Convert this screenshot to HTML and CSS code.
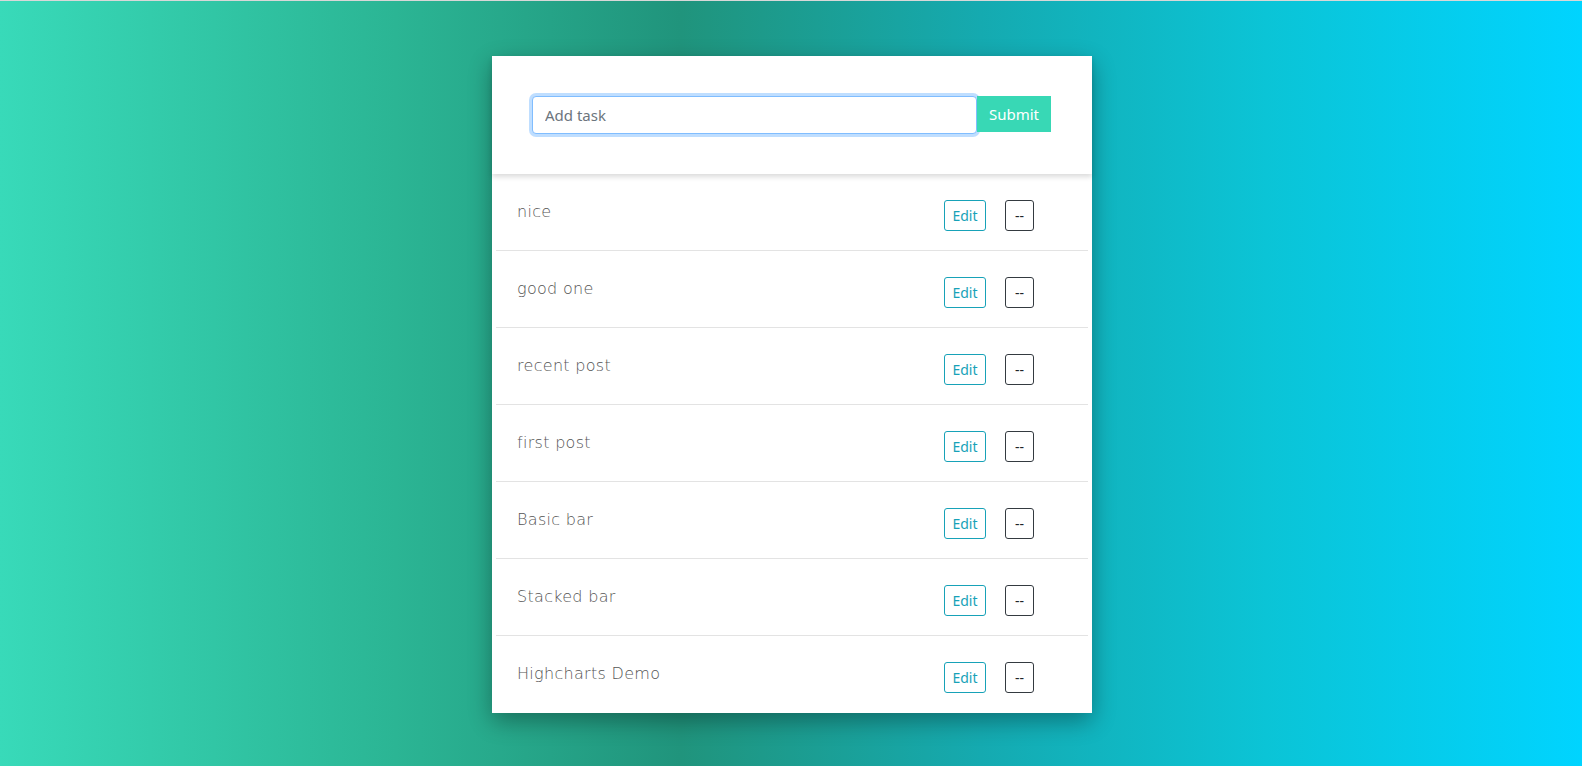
FILE: index.html
```html
<!DOCTYPE html>
<html lang="en">
<head>
<meta charset="utf-8">
<title>Todo</title>
<link rel="stylesheet" href="styles.css">
</head>
<body>
<div class="page">
  <div class="card">
    <form class="add-form">
      <input class="task-input" type="text" placeholder="Add task" autofocus>
      <button class="submit-btn" type="button">Submit</button>
    </form>
    <ul class="task-list">
      <li class="task"><span class="task-name">nice</span><div class="actions"><button class="btn btn-edit">Edit</button><button class="btn btn-del">--</button></div></li>
      <li class="task"><span class="task-name">good one</span><div class="actions"><button class="btn btn-edit">Edit</button><button class="btn btn-del">--</button></div></li>
      <li class="task"><span class="task-name">recent post</span><div class="actions"><button class="btn btn-edit">Edit</button><button class="btn btn-del">--</button></div></li>
      <li class="task"><span class="task-name">first post</span><div class="actions"><button class="btn btn-edit">Edit</button><button class="btn btn-del">--</button></div></li>
      <li class="task"><span class="task-name">Basic bar</span><div class="actions"><button class="btn btn-edit">Edit</button><button class="btn btn-del">--</button></div></li>
      <li class="task"><span class="task-name">Stacked bar</span><div class="actions"><button class="btn btn-edit">Edit</button><button class="btn btn-del">--</button></div></li>
      <li class="task"><span class="task-name">Highcharts Demo</span><div class="actions"><button class="btn btn-edit">Edit</button><button class="btn btn-del">--</button></div></li>
    </ul>
  </div>
</div>
</body>
</html>
```

FILE: styles.css
```css
* { box-sizing: border-box; }

html, body {
  margin: 0;
  height: 100%;
}

body {
  background: linear-gradient(to right, #38dab9 0%, #2bb594 25%, #20947c 43%, #15aab0 62%, #0bc4d6 80%, #00d4ff 100%);
  border-top: 1px solid #d8d8d8;
  font-family: "Noto Sans", "Open Sans", sans-serif;
}

.page {
  display: flex;
  justify-content: center;
  padding-top: 55px;
  padding-left: 2px;
}

.card {
  width: 600px;
  background: #fff;
  box-shadow: 0 8px 22px rgba(0, 0, 0, 0.33);
}

.add-form {
  position: relative;
  z-index: 1;
  display: flex;
  align-items: flex-start;
  height: 118px;
  padding: 40px 41px 40px 40px;
  background: #fff;
  box-shadow: 0 3px 5px rgba(0, 0, 0, 0.14);
}

.task-input {
  width: 445px;
  height: 38px;
  padding: 6px 12px;
  border: 1px solid #80bdff;
  border-radius: 4px;
  box-shadow: 0 0 0 3px rgba(0, 123, 255, 0.25);
  font-family: "Noto Sans", "Open Sans", sans-serif;
  font-size: 15px;
  color: #495057;
  caret-color: #333;
  outline: none;
}

.task-input::placeholder {
  color: #6c757d;
}

.submit-btn {
  width: 74px;
  height: 36px;
  border: none;
  border-radius: 0;
  background: #38d8b5;
  color: #fff;
  font-family: "Noto Sans", "Open Sans", sans-serif;
  font-size: 15px;
  padding: 0;
}

.task-list {
  list-style: none;
  margin: 0 4px;
  padding: 0;
}

.task {
  display: flex;
  align-items: flex-start;
  height: 77px;
  padding: 26px 54px 0 21px;
  border-bottom: 1px solid #e3e3e3;
}

.task:last-child {
  border-bottom-color: transparent;
}

.task-name {
  font-family: "DejaVu Sans", sans-serif;
  font-weight: 200;
  font-size: 16px;
  letter-spacing: 0.3px;
  line-height: 24px;
  color: #555;
}

.actions {
  margin-left: auto;
  display: flex;
  gap: 19px;
}

.btn {
  height: 31px;
  padding: 0;
  background: #fff;
  border-radius: 3px;
  font-family: "Noto Sans", "Open Sans", sans-serif;
  font-size: 14px;
  line-height: 1;
}

.btn-edit {
  width: 42px;
  border: 1px solid #17a2b8;
  color: #17a2b8;
}

.btn-del {
  width: 29px;
  border: 1px solid #343a40;
  color: #212529;
}
```
